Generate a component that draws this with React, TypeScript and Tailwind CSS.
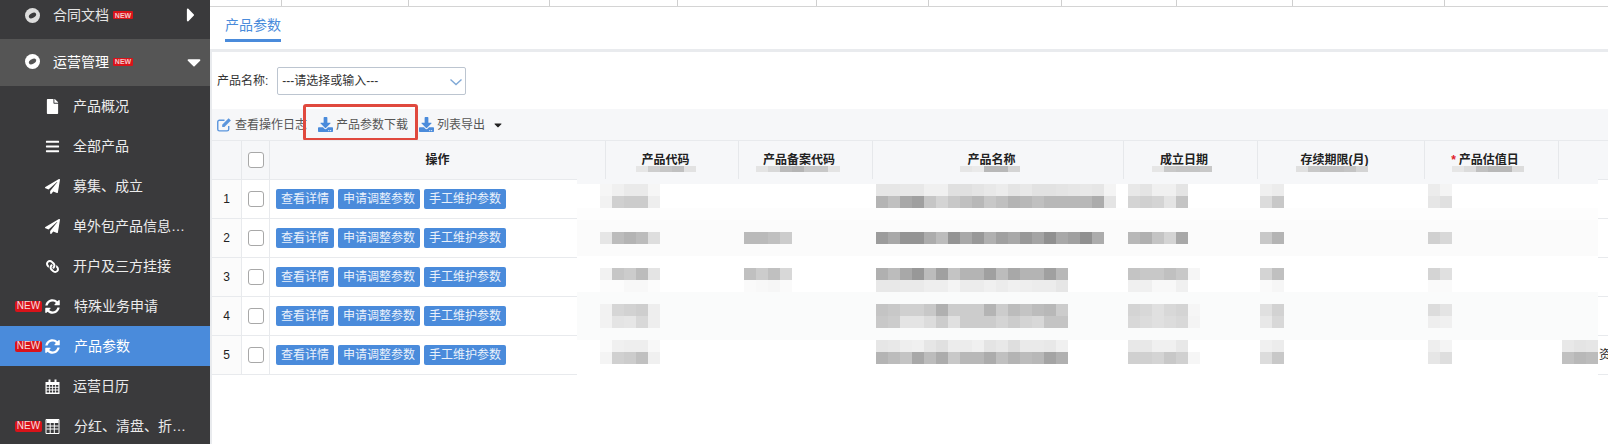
import React from "react";
import {
  FaBars,
  FaCaretDown,
  FaCaretRight,
  FaDownload,
  FaFile,
  FaLink,
  FaPaperPlane,
  FaSyncAlt,
} from "react-icons/fa";

const ticks = [72, 127, 141, 128, 139, 112, 133, 115, 116, 152];

function CalendarIcon({ className }: { className?: string }) {
  return (
    <svg className={className} viewBox="0 0 14 15" fill="none">
      <path d="M0 3h14v12H0z" fill="currentColor" />
      <path d="M3 0.5h2v3.5H3zM9 0.5h2v3.5H9z" fill="currentColor" />
      <path
        d="M1.2 6h2.4v1.8H1.2zM4.4 6h2.2v1.8H4.4zM7.4 6h2.2v1.8H7.4zM10.4 6h2.4v1.8h-2.4zM1.2 8.8h2.4v1.8H1.2zM4.4 8.8h2.2v1.8H4.4zM7.4 8.8h2.2v1.8H7.4zM10.4 8.8h2.4v1.8h-2.4zM1.2 11.6h2.4v2H1.2zM4.4 11.6h2.2v2H4.4zM7.4 11.6h2.2v2H7.4zM10.4 11.6h2.4v2h-2.4z"
        fill="#3a3a3c"
      />
    </svg>
  );
}

function CalculatorIcon({ className }: { className?: string }) {
  return (
    <svg className={className} viewBox="0 0 14 15" fill="none">
      <path d="M0.5 0.5h13v14H0.5z" stroke="currentColor" />
      <path d="M1 1h12v3H1z" fill="currentColor" />
      <path d="M1 7h12M1 10h12M4.7 4v10M8.8 4v10" stroke="currentColor" strokeWidth="1" />
    </svg>
  );
}

function ChainIcon({ className }: { className?: string }) {
  return <FaLink className={`${className} -scale-x-100 p-px`} />;
}

// round badge with a slanted dark lens, used by the top level menu groups
function DiscIcon({ className, hole }: { className?: string; hole: string }) {
  return (
    <svg className={className} viewBox="0 0 15 15">
      <circle cx="7.5" cy="7.5" r="7.5" fill="currentColor" />
      <ellipse cx="7.5" cy="7.5" rx="4" ry="2.3" transform="rotate(-32 7.5 7.5)" fill={hole} />
    </svg>
  );
}

function EditIcon({ className }: { className?: string }) {
  return (
    <svg className={className} viewBox="0 0 16 16" fill="none">
      <path
        d="M12.5 9.5v3.5a1.8 1.8 0 0 1-1.8 1.8H2.6A1.8 1.8 0 0 1 .8 13V5.2a1.8 1.8 0 0 1 1.8-1.8H8"
        stroke="currentColor"
        strokeWidth="1.5"
      />
      <path d="M5.5 8.3 12.4 1.4l2.4 2.4L7.9 10.7H5.5z" fill="currentColor" />
    </svg>
  );
}

const menu = [
  { icon: FaFile, label: "产品概况" },
  { icon: FaBars, label: "全部产品" },
  { icon: FaPaperPlane, label: "募集、成立" },
  { icon: FaPaperPlane, label: "单外包产品信息…" },
  { icon: ChainIcon, label: "开户及三方挂接" },
  { icon: FaSyncAlt, label: "特殊业务申请", isNew: true },
  { icon: FaSyncAlt, label: "产品参数", isNew: true, active: true },
  { icon: CalendarIcon, label: "运营日历" },
  { icon: CalculatorIcon, label: "分红、清盘、折…", isNew: true },
];

// mosaic patches, coordinates relative to the table, colours are greys
type Patch = { x: number; y: number; rows: string[] };
const px = (x: number, y: number, ...rows: string[]): Patch => ({ x: x - 212, y: y - 140, rows });

const patches: Patch[] = [
  px(636, 166, "e6 ce c6 c0 e2"),
  px(756, 166, "e4 d8 ba b4 c8 c8 e4"),
  px(960, 166, "e6 ea b8 b8 d4"),
  px(1152, 166, "e6 c8 c4 c4 c8"),
  px(1296, 166, "e0 c8 c0 c0 c4 d4"),
  px(1452, 166, "e6 dc c0 b8 b8 dc"),

  px(600, 184, "f6 f0 ea ea f6", "f2 d0 cc cc ee"),
  px(600, 232, "e6 bc b4 bc de"),
  px(600, 268, "f2 c6 cc bc e4", "fc fc f8 f8 fc"),
  px(600, 304, "f2 d6 d2 ce ee", "f2 e4 e6 d8 ee"),
  px(600, 340, "fa f0 ee ee f8", "f4 d0 cc c0 f0"),

  px(744, 232, "ba ba c0 cc"),
  px(744, 268, "c0 cc c0 d8", "fa f8 f6 fa"),

  px(
    876,
    184,
    "e6 e6 e8 e8 f0 f0 e0 e0 e4 e8 ec e4 e8 e2 e2 e4 e6 e8 e6 f4",
    "b4 c0 a8 a0 c6 d4 c8 c0 b8 c8 c0 b4 b8 c0 b8 b8 b8 b8 ac e4"
  ),
  px(876, 232, "9c a8 94 94 ac bc 94 a8 98 b0 a0 a8 98 a4 90 a8 a0 90 ac"),
  px(
    876,
    268,
    "b0 bc a8 98 bc a0 c4 b4 b4 a0 bc a8 b4 b4 a0 b8",
    "e8 e8 ea ea ee ee f4 ec ec f0 ec f0 ee ec ec e6"
  ),
  px(
    876,
    304,
    "c4 c8 d0 d0 c8 b0 cc cc cc b4 cc bc c4 bc b8 cc",
    "c8 cc e4 e4 dc cc e0 cc cc cc d4 cc d4 d8 c4 c4"
  ),
  px(
    876,
    340,
    "e6 e8 ee f0 e6 e0 ec ec f0 e4 e8 de ea ea e8 f0",
    "b4 bc c4 a8 bc ac c8 b8 b8 ac c0 b4 bc b8 a4 b0"
  ),

  px(1128, 184, "e8 e4 f0 f0 e4", "d4 d0 d4 e4 c4"),
  px(1128, 232, "b8 b0 c4 d4 a8"),
  px(1128, 268, "c4 c8 c8 c0 c8 f6", "f0 f0 f8 f8 f0 ff"),
  px(1128, 304, "d4 d8 e0 d8 d4 f6", "d8 dc e0 dc d8 f4"),
  px(1128, 340, "e8 e8 f0 f0 e8 ff", "d0 d0 d4 c8 d0 f6"),

  px(1260, 184, "f0 ec", "dc c8"),
  px(1260, 232, "c8 b4"),
  px(1260, 268, "d4 c0", "fa f6"),
  px(1260, 304, "e0 d2", "e8 d8"),
  px(1260, 340, "f0 ec", "dc c8"),

  px(1428, 184, "ec f4", "e6 e0"),
  px(1428, 232, "d0 d8"),
  px(1428, 268, "d4 e0", "fa fa"),
  px(1428, 304, "dc e4", "ee f0"),
  px(1428, 340, "ee f4", "e6 de"),

  px(1562, 340, "e8 e4 e6", "c0 b8 bc"),
];

function Mosaic({ patch }: { patch: Patch }) {
  return (
    <div className="absolute flex flex-col" style={{ left: patch.x, top: patch.y }}>
      {patch.rows.map((row, i) => (
        <div key={i} className={patch.y < 39 ? "flex h-[6px]" : "flex h-3"}>
          {row.split(" ").map((g, j) => (
            <div key={j} className="w-3" style={{ backgroundColor: `#${g}${g}${g}` }} />
          ))}
        </div>
      ))}
    </div>
  );
}

function NewTag() {
  return (
    <span className="flex h-[8px] w-[20px] items-center justify-center rounded-[1px] bg-[#d9131a] text-[7px] font-bold leading-none text-[#f3c9c9]">
      NEW
    </span>
  );
}

function SideItem({ item }: { item: (typeof menu)[number] }) {
  const Icon = item.icon;
  return (
    <div className={item.active ? "flex h-10 items-center bg-[#4a8bdb] text-white" : "flex h-10 items-center text-[#ececec]"}>
      <div className="flex w-[45px] justify-end pr-[3px]">
        {item.isNew && (
          <span className="flex h-[11px] w-[27px] items-center justify-center rounded-[2px] bg-[#d9131a] text-[10px] leading-none text-[#f6dcdc]">
            NEW
          </span>
        )}
      </div>
      <div className={item.isNew ? "w-[29px]" : "w-[28px]"}>
        <Icon className="h-[15px] w-[15px] text-white" />
      </div>
      <span className="text-sm whitespace-nowrap">{item.label}</span>
    </div>
  );
}

function Sidebar() {
  return (
    <div className="w-[210px] shrink-0 overflow-hidden bg-[#3a3a3c]">
      <div className="flex h-[39px] items-center pb-[9px] text-[#e4e4e4]">
        <DiscIcon className="ml-[25px] h-[15px] w-[15px] text-[#dddddd]" hole="#3a3a3c" />
        <span className="ml-[13px] text-sm">合同文档</span>
        <span className="ml-[4px]">
          <NewTag />
        </span>
        <FaCaretRight className="ml-[47px] text-[22px] text-white" />
      </div>
      <div className="flex h-[47px] items-center bg-[#555555] pb-[2px] text-white">
        <DiscIcon className="ml-[25px] h-[15px] w-[15px] text-white" hole="#555555" />
        <span className="ml-[13px] text-sm">运营管理</span>
        <span className="ml-[4px]">
          <NewTag />
        </span>
        <FaCaretDown className="ml-[50px] text-[22px]" />
      </div>
      {menu.map((item) => (
        <SideItem key={item.label} item={item} />
      ))}
    </div>
  );
}

function Check() {
  return <div className="h-4 w-4 rounded-[3px] border border-[#a8a8a8] bg-white" />;
}

function DataButton({ children }: { children: React.ReactNode }) {
  return (
    <span className="flex h-5 items-center rounded-[2px] bg-[#4a8bdb] px-[5px] text-xs whitespace-nowrap text-[#e9f1fb]">
      {children}
    </span>
  );
}

function HeadCell({ width, children }: { width: string; children: React.ReactNode }) {
  return (
    <div className={`flex ${width} shrink-0 items-center justify-center border-r border-[#e6e8eb] pr-[13px]`}>
      {children}
    </div>
  );
}

function Table() {
  return (
    <div className="relative text-xs text-[#222]">
      {/* header */}
      <div className="flex h-10 border-t border-b border-[#e8eaed] bg-[#f6f7f9] font-bold">
        <div className="w-[30px] shrink-0 border-r border-[#e6e8eb]" />
        <div className="flex w-[28px] shrink-0 items-center justify-center border-r border-[#e6e8eb]">
          <Check />
        </div>
        <div className="flex w-[336px] shrink-0 items-center justify-center border-r border-[#e6e8eb]">操作</div>
        <HeadCell width="w-[133px]">产品代码</HeadCell>
        <HeadCell width="w-[134px]">产品备案代码</HeadCell>
        <HeadCell width="w-[251px]">产品名称</HeadCell>
        <HeadCell width="w-[134px]">成立日期</HeadCell>
        <HeadCell width="w-[167px]">存续期限(月)</HeadCell>
        <HeadCell width="w-[134px]">
          <span className="mr-[3px] text-[#e0202a]">*</span>产品估值日
        </HeadCell>
      </div>

      {/* rows */}
      {[1, 2, 3, 4, 5].map((n) => (
        <div key={n} className="flex h-[39px] border-b border-[#e8eaed]">
          <div className="flex w-[30px] shrink-0 items-center justify-center border-r border-[#e8eaed] bg-[#fbfbfb]">{n}</div>
          <div className="flex w-[28px] shrink-0 items-center justify-center border-r border-[#e8eaed]">
            <Check />
          </div>
          <div className="flex w-[1288px] shrink-0 items-center gap-1 pl-[6px]">
            <DataButton>查看详情</DataButton>
            <DataButton>申请调整参数</DataButton>
            <DataButton>手工维护参数</DataButton>
          </div>
          <div className="flex items-center pl-[41px] whitespace-nowrap">{n === 5 ? "资" : ""}</div>
        </div>
      ))}

      {/* censored area lying over the table */}
      <div className="absolute top-[39px] left-[365px] flex h-[196px] w-[1021px] flex-col">
        <div className="h-[5px] bg-[#f6f7f9]" />
        <div className="h-6 bg-white" />
        <div className="h-3 bg-[#fdfdfd]" />
        <div className="h-9 bg-[#fbfbfb]" />
        <div className="h-9 bg-white" />
        <div className="h-12 bg-[#fafbfb]" />
        <div className="flex-1 bg-white" />
      </div>
      {patches.map((p, i) => (
        <Mosaic key={i} patch={p} />
      ))}
    </div>
  );
}

export default function App() {
  return (
    <div className="flex h-[444px] w-[1608px] overflow-hidden bg-white font-['Liberation_Sans','Noto_Sans_CJK_SC',sans-serif]">
      <Sidebar />
      <div className="flex min-w-0 flex-1 flex-col">
        {/* page strip above */}
        <div className="flex h-[7px] shrink-0 border-b border-[#d4d4d4]">
          {ticks.map((w, i) => (
            <div key={i} className="h-full shrink-0 border-r border-[#cfcfcf]" style={{ width: w }} />
          ))}
        </div>

        {/* tab */}
        <div className="h-[42px] shrink-0 pl-[15px]">
          <div className="flex h-[35px] w-14 items-center justify-center border-b-[3px] border-[#4a8bdb] pt-[3px] text-sm whitespace-nowrap text-[#4a8bdb]">
            产品参数
          </div>
        </div>

        <div className="flex-1 border-t-[3px] border-l-2 border-[#e9ebee]">
          {/* filter */}
          <div className="flex h-[57px] items-center pl-[5px] text-xs text-[#333]">
            <span className="whitespace-nowrap">产品名称:</span>
            <div className="relative ml-[9px] flex h-7 w-[189px] items-center rounded-[2px] border border-[#bcc5d0] pl-[4px] text-[#333]">
              ---请选择或输入---
              <svg className="absolute top-[10px] right-[2px] h-[8px] w-[14px]" viewBox="0 0 14 8" fill="none">
                <path d="M1.5 1.5 7 6.5l5.5-5" stroke="#7fa8d6" strokeWidth="1.4" />
              </svg>
            </div>
          </div>

          {/* toolbar */}
          <div className="relative flex h-[31px] items-center bg-[#f6f7f9] pl-[5px] text-xs text-[#555]">
            <EditIcon className="h-[15px] w-[15px] text-[#5b96dd]" />
            <span className="ml-[3px] whitespace-nowrap">查看操作日志</span>
            <FaDownload className="ml-[11px] text-[15px] text-[#4a8bdb]" />
            <span className="ml-[3px] whitespace-nowrap">产品参数下载</span>
            <FaDownload className="ml-[11px] text-[15px] text-[#4a8bdb]" />
            <span className="ml-[3px] whitespace-nowrap">列表导出</span>
            <FaCaretDown className="ml-[7px] text-[12px] text-[#222]" />
            {/* red annotation box */}
            <div className="absolute top-[-5px] left-[91px] h-[37px] w-[115px] rounded-[3px] border-[3px] border-[#e0493e]" />
          </div>

          <Table />
        </div>
      </div>
    </div>
  );
}
